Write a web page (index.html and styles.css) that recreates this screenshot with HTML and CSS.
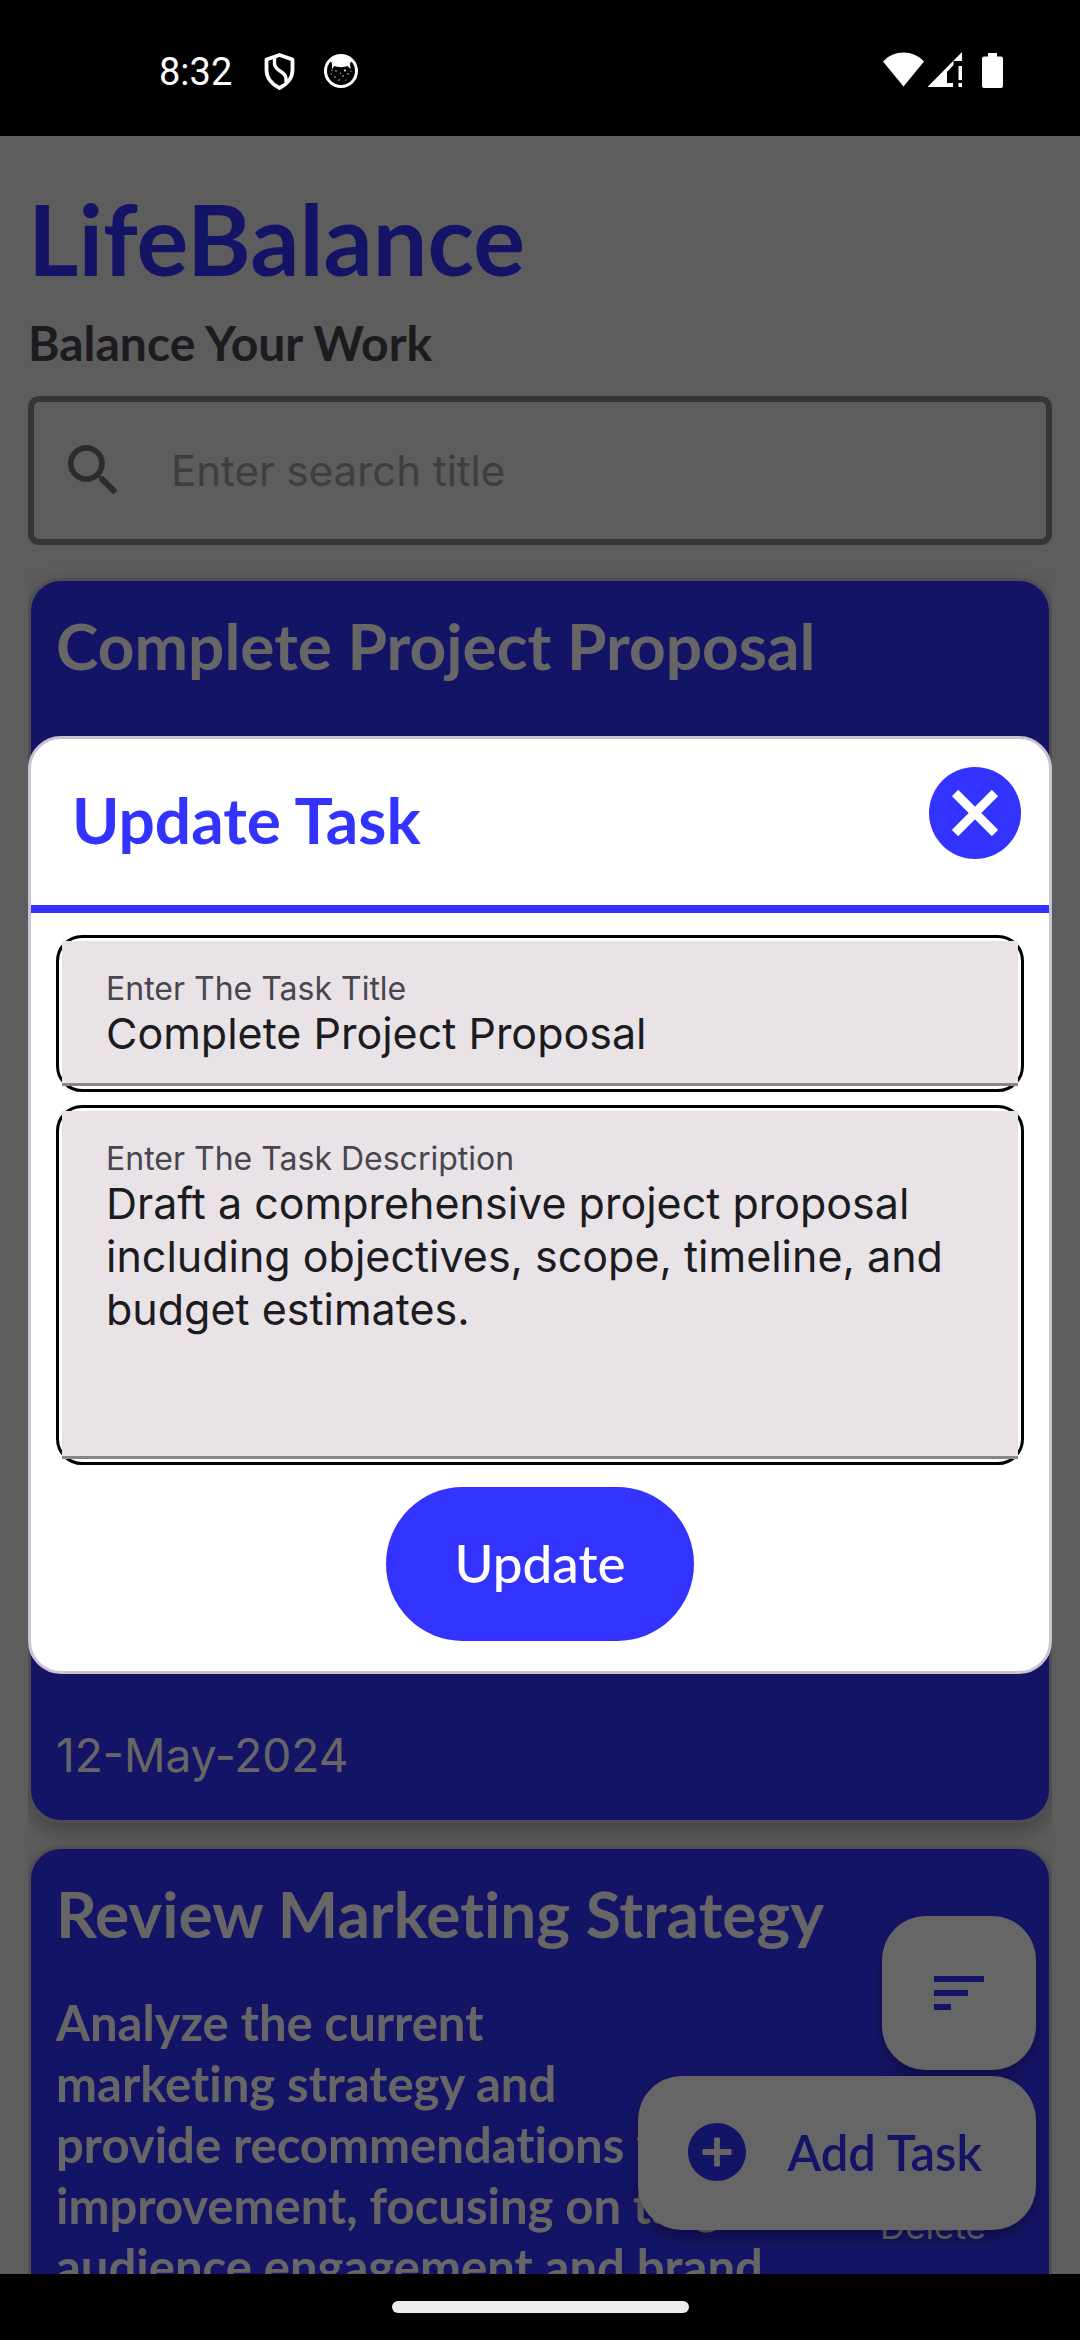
FILE: index.html
```html
<!DOCTYPE html>
<html lang="en">
<head>
  <meta charset="utf-8">
  <meta name="viewport" content="width=device-width, initial-scale=1">
  <title>LifeBalance</title>
  <link rel="stylesheet" href="styles.css">
</head>
<body>
  <header class="status-bar">
    <div class="status-left">
      <span class="clock">8:32</span>
      <svg class="icon-shield" viewBox="0 0 31 37" aria-hidden="true">
        <path d="M15.500 2 L28.500 6.500 V17 C28.500 25 23 31.500 15.500 35 C8 31.500 2.500 25 2.500 17 V6.500 Z" fill="none" stroke="#fff" stroke-width="3.800" stroke-linejoin="round"/>
        <path d="M10.500 5 V10.500 C10.500 18.500 22 18 22 25.500 V29" fill="none" stroke="#fff" stroke-width="3.400"/>
      </svg>
      <svg class="icon-cat" viewBox="0 0 36 36" aria-hidden="true">
        <circle cx="18" cy="18" r="15.500" fill="none" stroke="#fff" stroke-width="3"/>
        <path d="M6 7 C11 1 25 1 30 7 L27 10 L27.500 16 L24.500 13 C21 14.500 15 14.500 11.500 13 L9 16 L9 10 Z" fill="#fff"/>
        <g fill="#fff">
          <circle cx="13" cy="18" r=".7"/><circle cx="22" cy="17.500" r="1"/><circle cx="17.500" cy="20" r=".6"/>
          <circle cx="8" cy="21" r=".6"/><circle cx="12" cy="24" r=".7"/><circle cx="20" cy="23" r=".7"/>
          <circle cx="25" cy="21" r=".7"/><circle cx="28" cy="18" r=".6"/><circle cx="16" cy="27" r=".7"/>
          <circle cx="23" cy="27" r=".6"/><circle cx="9" cy="17" r=".6"/>
        </g>
      </svg>
    </div>
    <svg class="icon-signals" viewBox="0 0 122 38" aria-hidden="true" fill="#fff">
      <path d="M0 9.500 C11-2.500 30-2.500 41 9.500 L20.500 34.500 Z"/>
      <path d="M79 0 V9 H70.500 V13 L64 20 V31 H70 V35 H44.500 Z"/>
      <path d="M75.500 14 H79 V28 H75.500 Z M75.500 31 H79 V35 H75.500 Z"/>
      <path d="M105 1 H114 V4.500 H118 Q120 4.500 120 6.500 V34 Q120 36 118 36 H101 Q99 36 99 34 V6.500 Q99 4.500 101 4.500 H105 Z"/>
    </svg>
  </header>

  <main class="app">
    <div class="page">
      <h1 class="app-title">LifeBalance</h1>
      <p class="tagline">Balance Your Work</p>

      <label class="search">
        <svg class="icon-search" viewBox="3 3 18 18" aria-hidden="true">
          <path d="M15.500 14h-.79l-.28-.27A6.470 6.470 0 0 0 16 9.500 6.500 6.500 0 1 0 9.500 16c1.610 0 3.090-.59 4.230-1.570l.27.28v.79l5 4.990L20.490 19l-4.990-5zm-6 0C7.010 14 5 11.990 5 9.500S7.010 5 9.500 5 14 7.010 14 9.500 11.990 14 9.500 14z"/>
        </svg>
        <input class="search-input" type="search" placeholder="Enter search title" aria-label="Enter search title">
      </label>

      <section class="task-list" aria-label="Tasks">
        <article class="task task-tall">
          <h2 class="task-title">Complete Project Proposal</h2>
          <div class="task-body">
            <p class="task-text">Draft a comprehensive project</p>
          </div>
          <time class="task-date" datetime="2024-05-12">12-May-2024</time>
        </article>
        <article class="task">
          <h2 class="task-title">Review Marketing Strategy</h2>
          <div class="task-body">
            <p class="task-text">Analyze the current<br>marketing strategy and<br>provide recommendations for<br>improvement, focusing on target<br>audience engagement and brand</p>
            <button class="task-delete" type="button">Delete</button>
          </div>
        </article>
      </section>
    </div>

    <div class="fabs">
      <button class="fab fab-sort" type="button" aria-label="Sort">
        <svg class="icon-sort" viewBox="0 0 50 34" aria-hidden="true">
          <path d="M0 0H50V6H0Z M0 14H34V20H0Z M0 28H17V34H0Z"/>
        </svg>
      </button>
      <button class="fab fab-add" type="button">
        <svg class="icon-add" viewBox="2 2 20 20" aria-hidden="true">
          <path d="M12 2C6.480 2 2 6.480 2 12s4.480 10 10 10 10-4.480 10-10S17.520 2 12 2zm5 11h-4v4h-2v-4H7v-2h4V7h2v4h4v2z"/>
        </svg>
        <span>Add Task</span>
      </button>
    </div>

    <div class="scrim">
      <div class="dialog" role="dialog" aria-modal="true" aria-labelledby="dialog-title">
        <div class="dialog-head">
          <h2 class="dialog-title" id="dialog-title">Update Task</h2>
          <button class="close" type="button" aria-label="Close">
            <svg class="icon-close" viewBox="0 0 46 46" aria-hidden="true">
              <path d="M3 3 43 43M43 3 3 43"/>
            </svg>
          </button>
        </div>
        <form class="form">
          <div class="field">
            <div class="field-fill">
              <label class="field-label" for="task-title">Enter The Task Title</label>
              <input class="field-control" id="task-title" type="text" value="Complete Project Proposal">
            </div>
          </div>
          <div class="field">
            <div class="field-fill field-fill-area">
              <label class="field-label" for="task-description">Enter The Task Description</label>
              <textarea class="field-control" id="task-description" rows="5">Draft a comprehensive project proposal including objectives, scope, timeline, and budget estimates.</textarea>
            </div>
          </div>
          <button class="submit" type="button">Update</button>
        </form>
      </div>
    </div>
  </main>

  <footer class="nav-bar"><span class="nav-handle"></span></footer>
</body>
</html>
```
FILE: styles.css
```css
:root {
  --blue: #3333ff;
  --outline: #cac4d0;
  --display: Lato, "Open Sans", sans-serif;
  --text: Inter, Roboto, sans-serif;
}

* { box-sizing: border-box; }

body {
  margin: 0;
  height: 100vh;
  display: flex;
  flex-direction: column;
  background: #000;
  font-family: var(--text);
}

h1, h2, p { margin: 0; }

button, input, textarea {
  margin: 0;
  padding: 0;
  border: 0;
  background: none;
  font: inherit;
  color: inherit;
  outline: 0;
}

svg { display: block; flex: none; }

/* system bars */
.status-bar {
  flex: none;
  height: 136px;
  padding: 6px 75px 0 159px;
  display: flex;
  align-items: center;
  justify-content: space-between;
  color: #fff;
}
.status-left { display: flex; align-items: center; }
.clock { padding-top: 2px; font: 400 38px/44px Roboto, sans-serif; }
.icon-shield { width: 31px; height: 37px; margin: 0 28px 0 32px; }
.icon-cat { width: 36px; height: 36px; }
.icon-signals { width: 122px; height: 38px; }

.nav-bar {
  flex: none;
  height: 66px;
  display: flex;
  align-items: center;
  justify-content: center;
}
.nav-handle { width: 297px; height: 12px; border-radius: 6px; background: #ececec; }

/* main screen */
.app {
  flex: 1;
  min-height: 0;
  position: relative;
  overflow: hidden;
  background: #e8e8e8;
}
.page { padding: 45px 28px 0; }

.app-title {
  font: 700 97px/116px var(--display);
  color: var(--blue);
}
.tagline {
  margin-top: 17px;
  font: 700 48px/58px var(--display);
  color: #49454f;
}

.search {
  margin-top: 24px;
  height: 149px;
  padding: 0 34px;
  display: flex;
  align-items: center;
  gap: 52px;
  border: 6px solid #888;
  border-radius: 11px;
}
.icon-search { width: 51px; height: 51px; fill: #6e6e6e; }
.search-input { flex: 1; min-width: 0; font-size: 42px; line-height: 52px; }
.search-input::placeholder { color: #9b9b9b; opacity: 1; }

.task-list {
  margin: 21px 0 0;
  padding-top: 12px;
  display: flex;
  flex-direction: column;
  gap: 23px;
  overflow: hidden;
}
.task {
  flex: none;
  padding: 27px 25px 37px;
  display: flex;
  flex-direction: column;
  border: 3px solid var(--outline);
  border-radius: 33px;
  background: var(--blue);
  box-shadow: 0 8px 20px rgba(0, 0, 0, .3);
  color: #fff;
}
.task-tall { min-height: 1245px; }
.task-title { font: 700 64px/76px var(--display); font-variant-ligatures: none; }
.task-date { margin-top: auto; font-size: 46px; line-height: 56px; }
.task-body {
  margin-top: 40px;
  padding-right: 38px;
  display: flex;
  justify-content: space-between;
}
.task-text {
  font: 700 49px/61px var(--display);
  font-variant-ligatures: none;
  white-space: nowrap;
}
.task-delete { align-self: flex-end; margin-bottom: 49px; font-size: 35px; line-height: 44px; }

/* floating buttons */
.fabs {
  position: absolute;
  right: 44px;
  bottom: 44px;
  display: flex;
  flex-direction: column;
  align-items: flex-end;
  gap: 6px;
}
.fab {
  height: 154px;
  display: flex;
  align-items: center;
  justify-content: center;
  border-radius: 44px;
  background: #fff;
  color: var(--blue);
  box-shadow: 0 8px 16px rgba(0, 0, 0, .3);
}
.fab-sort { width: 154px; }
.fab-add { padding: 0 54px 2px 50px; gap: 42px; font: 600 49px/60px var(--display); }
.icon-sort { width: 50px; height: 34px; fill: var(--blue); }
.icon-add { width: 58px; height: 58px; fill: var(--blue); }

/* update dialog */
.scrim {
  position: absolute;
  inset: 0;
  padding: 0 28px;
  display: grid;
  align-content: center;
  background: rgba(0, 0, 0, .6);
}
.dialog {
  border: 3px solid var(--outline);
  border-radius: 33px;
  background: #fff;
}
.dialog-head {
  padding: 28px 28px 46px 41px;
  display: flex;
  align-items: flex-start;
  justify-content: space-between;
  border-bottom: 8px solid var(--blue);
}
.dialog-title { padding-top: 15px; font: 700 64px/76px var(--display); color: var(--blue); }
.close {
  width: 92px;
  height: 92px;
  display: grid;
  place-items: center;
  border-radius: 50%;
  background: var(--blue);
}
.icon-close { width: 46px; height: 46px; fill: none; stroke: #fff; stroke-width: 9; }

.form {
  padding: 22px 25px 30px;
  display: flex;
  flex-direction: column;
  gap: 13px;
}
.field { padding: 3px; border: 3px solid #000; border-radius: 26px; }
.field-fill {
  padding: 29px 44px 23px;
  display: flex;
  flex-direction: column;
  border-bottom: 3px solid #8a8589;
  background: #e9e3e8;
}
.field-fill-area { padding-bottom: 14px; }
.field-label { font-size: 32px; line-height: 37px; color: #49454f; }
.field-control {
  width: 100%;
  font-size: 43px;
  line-height: 53px;
  color: #1c1b1f;
  resize: none;
  overflow: hidden;
}
input.field-control { height: 53px; }

.submit {
  align-self: center;
  width: 308px;
  height: 154px;
  margin-top: 9px;
  padding-bottom: 2px;
  border-radius: 77px;
  background: var(--blue);
  font: 500 53px/64px var(--display);
  color: #fff;
}
```
